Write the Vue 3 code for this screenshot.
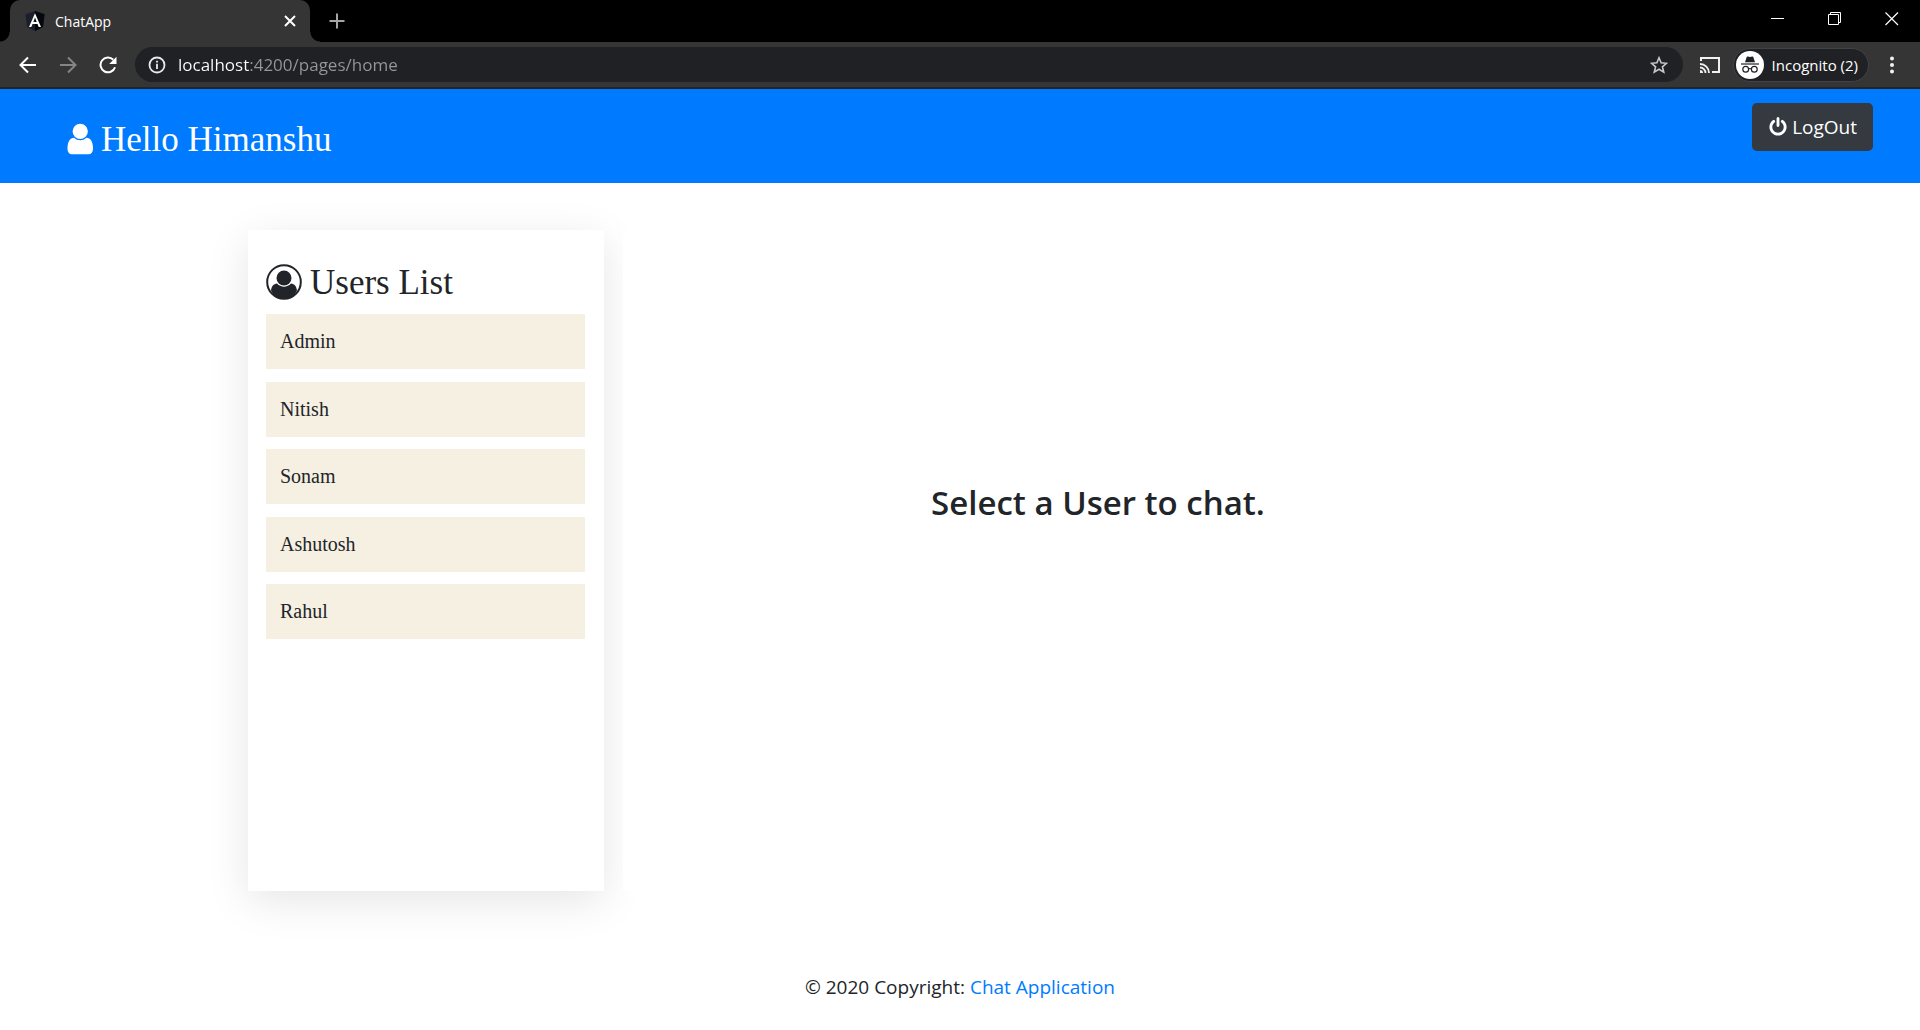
<script setup>
import { ref } from 'vue'

const url = ref('localhost:4200/pages/home')
const users = ['Admin', 'Nitish', 'Sonam', 'Ashutosh', 'Rahul']
</script>

<template>
  <div class="window">
    <div class="tabstrip">
      <div class="tab">
        <svg class="favicon" width="20" height="20" viewBox="0 0 20 20" aria-hidden="true">
          <path d="M10 0 19.500 3.300 18 16 10 20 2 16 .500 3.300Z" fill="#1b1f2b" />
          <path d="M10 0 19.500 3.300 18 16 10 20Z" fill="#05070f" />
          <path d="M10 2.200 4 16h2.300l1.200-3h5l1.200 3H16Zm0 4.200 1.700 4.700H8.300Z" fill="#fff" fill-rule="evenodd" />
        </svg>
        <span class="tab-title">ChatApp</span>
        <button class="icon-btn" aria-label="Close tab">
          <svg width="12" height="12" viewBox="0 0 12 12"><path d="M1 1l10 10M11 1 1 11" stroke="#fff" stroke-width="2" /></svg>
        </button>
      </div>
      <button class="icon-btn new-tab" aria-label="New tab">
        <svg width="16" height="16" viewBox="0 0 16 16"><path d="M8 .500v15M.500 8h15" stroke="#a5a5a5" stroke-width="2" /></svg>
      </button>
      <div class="window-controls">
        <button class="icon-btn" aria-label="Minimize">
          <svg width="14" height="14" viewBox="0 0 14 14"><path d="M0 6.500h13" stroke="#fff" /></svg>
        </button>
        <button class="icon-btn" aria-label="Restore">
          <svg width="14" height="14" viewBox="0 0 14 14"><path d="M.500 2.500h10v10h-10zM2.500 2.500v-2h10v10h-2" fill="none" stroke="#fff" /></svg>
        </button>
        <button class="icon-btn" aria-label="Close">
          <svg width="14" height="14" viewBox="0 0 14 14"><path d="M.500.500l12.500 12.500M13 .500.500 13" stroke="#fff" stroke-width="1.200" /></svg>
        </button>
      </div>
    </div>

    <div class="toolbar">
      <div class="nav-buttons">
        <button class="icon-btn" aria-label="Back">
          <svg width="18" height="18" viewBox="0 0 18 18"><path d="M17 9H2M9 1.500 1.500 9 9 16.500" fill="none" stroke="#fff" stroke-width="2" /></svg>
        </button>
        <button class="icon-btn" aria-label="Forward">
          <svg width="18" height="18" viewBox="0 0 18 18"><path d="M1 9h15M9 1.500 16.500 9 9 16.500" fill="none" stroke="#858585" stroke-width="2" /></svg>
        </button>
        <button class="icon-btn" aria-label="Reload">
          <svg width="18" height="18" viewBox="0 0 18 18"><path d="M16 11.200A7.400 7.400 0 1 1 14.300 3.800" fill="none" stroke="#fff" stroke-width="2" /><path d="M17.500.800V8h-7.300Z" fill="#fff" /></svg>
        </button>
      </div>
      <div class="address">
        <svg width="18" height="18" viewBox="0 0 18 18" aria-hidden="true"><circle cx="9" cy="9" r="7.500" fill="none" stroke="#e8eaed" stroke-width="1.800" /><path d="M9 7.800v5.200M9 4.800v1.800" stroke="#e8eaed" stroke-width="1.800" /></svg>
        <input v-model="url" class="url" type="text" aria-label="Address" spellcheck="false" />
        <button class="icon-btn" aria-label="Bookmark this page">
          <svg width="18" height="18" viewBox="0 0 18 18"><path d="M9 1.800l2.100 5 5.400.500-4.100 3.500 1.300 5.300L9 13.200l-4.700 2.900 1.300-5.300L1.500 7.300l5.400-.500Z" fill="none" stroke="#c6c8ca" stroke-width="1.600" /></svg>
        </button>
      </div>
      <button class="icon-btn cast" aria-label="Cast">
        <svg width="20" height="18" viewBox="0 0 20 18"><path d="M1 5V2h18v14h-7" fill="none" stroke="#f1f1f1" stroke-width="2" /><path d="M0 11.500a5.500 5.500 0 0 1 5.500 5.500M0 8a9 9 0 0 1 9 9" fill="none" stroke="#f1f1f1" stroke-width="1.800" /><path d="M0 14a3 3 0 0 1 3 3H0Z" fill="#f1f1f1" /></svg>
      </button>
      <button class="incognito">
        <svg width="28" height="28" viewBox="0 0 28 28" aria-hidden="true">
          <circle cx="14" cy="14" r="14" fill="#fff" />
          <path d="M9 11.200 10.700 6q.300-.800 1.200-.500l2.100.500 2.100-.500q.900-.300 1.200.500l1.700 5.200Z" fill="#202124" />
          <path d="M5 13h18" stroke="#202124" stroke-width="1.200" />
          <circle cx="9.700" cy="18.200" r="2.900" fill="none" stroke="#202124" stroke-width="1.200" />
          <circle cx="18.300" cy="18.200" r="2.900" fill="none" stroke="#202124" stroke-width="1.200" />
          <path d="M12.600 18q1.400-1 2.800 0" fill="none" stroke="#202124" stroke-width="1.200" />
        </svg>
        <span>Incognito (2)</span>
      </button>
      <button class="icon-btn menu" aria-label="Menu">
        <svg width="4" height="18" viewBox="0 0 4 18"><g fill="#f1f1f1"><circle cx="2" cy="2.500" r="2" /><circle cx="2" cy="9" r="2" /><circle cx="2" cy="15.500" r="2" /></g></svg>
      </button>
    </div>

    <header class="header">
      <h1 class="greeting">
        <svg width="26" height="36" viewBox="232 0 1304 1792" aria-hidden="true"><path fill="#fff" d="M1536 1399q0 109-62.500 187t-150.500 78h-854q-88 0-150.500-78t-62.500-187q0-85 8.500-160.500t31.500-152 58.500-131 94-89 134.500-34.500q131 128 313 128t313-128q76 0 134.500 34.500t94 89 58.500 131 31.500 152 8.500 160.500zm-256-887q0 159-112.500 271.500t-271.500 112.500-271.500-112.500-112.500-271.500 112.500-271.500 271.500-112.500 271.500 112.500 112.500 271.500z" /></svg>
        <span>Hello Himanshu</span>
      </h1>
      <button class="logout">
        <svg width="20" height="20" viewBox="0 0 1792 1792" aria-hidden="true"><path fill="#fff" d="M1664 896q0 156-61 298t-164 245-245 164-298 61-298-61-245-164-164-245-61-298q0-182 80.500-343t226.500-270q43-32 95.500-25t83.500 50q32 42 24.500 94.500t-49.500 84.500q-98 74-151.500 181t-53.500 228q0 104 40.500 198.500t109.500 163.500 163.500 109.500 198.500 40.500 198.500-40.500 163.500-109.500 109.500-163.500 40.500-198.500q0-121-53.500-228t-151.500-181q-42-32-49.500-84.500t24.500-94.500q31-43 84-50t95 25q146 109 226.500 270t80.500 343zm-640-768v640q0 52-38 90t-90 38-90-38-38-90v-640q0-52 38-90t90-38 90 38 38 90z" /></svg>
        <span>LogOut</span>
      </button>
    </header>

    <main class="container">
      <aside class="users">
        <h2 class="users-title">
          <svg width="36" height="36" viewBox="0 0 36 36" aria-hidden="true">
            <circle cx="18" cy="18" r="16.800" fill="none" stroke="#212529" stroke-width="2" />
            <circle cx="18" cy="14" r="7.500" fill="#212529" />
            <path d="M5 26.500C5.500 22.500 7.500 19.800 11 19.500c4 4.200 10 4.200 14 0 3.500.300 5.500 3 6 7C28.500 32 23.500 35 18 35S7.500 32 5 26.500Z" fill="#212529" />
          </svg>
          <span>Users List</span>
        </h2>
        <ul class="user-list">
          <li v-for="user in users" :key="user">
            <button class="user">{{ user }}</button>
          </li>
        </ul>
      </aside>
      <section class="chat">
        <h2 class="prompt">Select a User to chat.</h2>
      </section>
    </main>

    <footer class="footer">© 2020 Copyright: <a href="#">Chat Application</a></footer>
  </div>
</template>

<style>
body {
  margin: 0;
  background: #fff;
}
</style>

<style scoped>
* {
  box-sizing: border-box;
}

.window {
  font-family: "Segoe UI", "Open Sans", sans-serif;
  color: #212529;
}

button {
  margin: 0;
  border: 0;
  font: inherit;
  cursor: pointer;
}

svg {
  display: block;
  flex: none;
}

.icon-btn {
  padding: 0;
  background: none;
}

.tabstrip {
  display: flex;
  align-items: center;
  height: 42px;
  padding-left: 10px;
  background: #000;
}

.tab {
  position: relative;
  display: flex;
  align-items: center;
  gap: 10px;
  width: 300px;
  height: 42px;
  padding: 0 14px 0 15px;
  border-radius: 10px 10px 0 0;
  background: #353535;
  color: #fff;
  font-size: 14px;
}

.tab::before,
.tab::after {
  content: "";
  position: absolute;
  bottom: 0;
  width: 10px;
  height: 10px;
}

.tab::before {
  right: 100%;
  background: radial-gradient(circle at 0 0, #000 9px, #353535 10px);
}

.tab::after {
  left: 100%;
  background: radial-gradient(circle at 100% 0, #000 9px, #353535 10px);
}

.tab-title {
  flex: 1;
}

.new-tab {
  margin-left: 19px;
}

.window-controls {
  display: flex;
  gap: 43px;
  margin-left: auto;
  padding: 0 21px 5px 0;
}

.toolbar {
  display: flex;
  align-items: center;
  height: 47px;
  padding: 0 26px 0 19px;
  border-bottom: 2px solid #232427;
  background: #353535;
}

.nav-buttons {
  display: flex;
  gap: 22px;
}

.address {
  flex: 1;
  display: flex;
  align-items: center;
  gap: 12px;
  height: 35px;
  margin-left: 18px;
  padding: 0 15px 0 13px;
  border-radius: 18px;
  background: #202124;
}

.url {
  flex: 1;
  min-width: 0;
  padding: 0;
  border: 0;
  outline: 0;
  background: linear-gradient(90deg, #fff 72px, #969799 72px);
  background-clip: text;
  -webkit-background-clip: text;
  color: transparent;
  font-family: inherit;
  font-size: 17px;
  line-height: 24px;
}

.cast {
  margin-left: 17px;
}

.incognito {
  display: flex;
  align-items: center;
  gap: 8px;
  height: 34px;
  margin-left: 13px;
  padding: 0 10px 0 2px;
  border: 1px solid #414245;
  border-radius: 17px;
  background: #202124;
  color: #fff;
  font-size: 15px;
}

.menu {
  margin-left: 21px;
}

.header {
  display: flex;
  justify-content: space-between;
  align-items: flex-start;
  padding: 14px 47px 18px 67px;
  background: #007bff;
  color: #fff;
}

.greeting,
.users-title {
  display: flex;
  align-items: center;
  gap: 8px;
  margin: 0;
  font-family: "Times New Roman", "Liberation Serif", serif;
  font-size: 35px;
  font-weight: 400;
  line-height: 44px;
}

.greeting {
  margin-top: 15px;
  padding-bottom: 3px;
}

.greeting svg,
.users-title svg {
  margin-bottom: 2px;
}

.logout {
  display: flex;
  align-items: center;
  gap: 4px;
  height: 48px;
  padding: 0 16px;
  border-radius: 5px;
  background: #343a40;
  color: #fff;
  font-size: 19px;
}

.container {
  display: flex;
  align-items: stretch;
  max-width: 1424px;
  min-height: 661px;
  margin: 47px auto 0;
}

.users {
  flex: 0 0 25%;
  padding: 31px 19px 31px 18px;
  box-shadow: 0 10px 40px rgba(0, 0, 0, 0.1);
}

.users-title {
  margin-bottom: 9px;
}

.user-list {
  display: flex;
  flex-direction: column;
  justify-content: space-between;
  height: 325px;
  margin: 0;
  padding: 0;
  list-style: none;
}

.user {
  display: block;
  width: 100%;
  height: 55px;
  padding: 0 14px;
  background: #f6f0e2;
  color: #212529;
  font-family: "Times New Roman", "Liberation Serif", serif;
  font-size: 20px;
  text-align: left;
}

.chat {
  position: relative;
  flex: 0 1 950px;
  display: flex;
  justify-content: center;
  align-items: flex-start;
  margin-left: 19px;
  padding-top: 252px;
  background: #fff;
}

.prompt {
  margin: 0;
  font-size: 33px;
  font-weight: 600;
  line-height: 42px;
}

.footer {
  padding: 81px 20px 28px;
  font-size: 19px;
  line-height: 30px;
  text-align: center;
}

.footer a {
  color: #007bff;
  text-decoration: none;
}
</style>
